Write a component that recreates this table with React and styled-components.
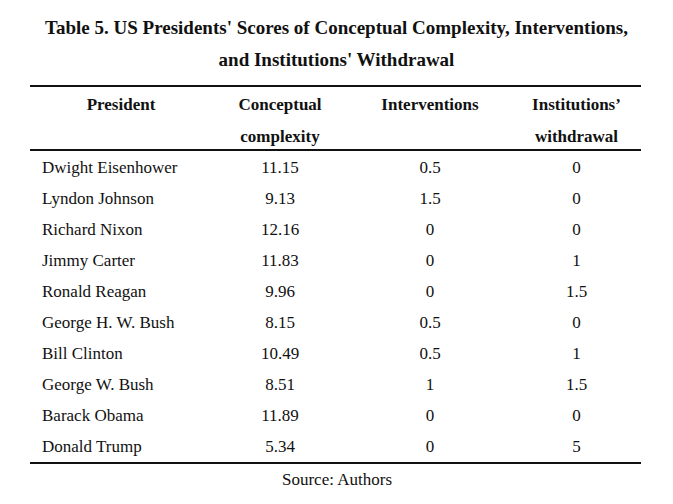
import React from 'react';
import styled, { createGlobalStyle } from 'styled-components';

const GlobalStyle = createGlobalStyle`
  html, body {
    margin: 0;
    padding: 0;
    background: #fff;
  }
  body {
    font-family: "Liberation Serif", "Times New Roman", serif;
    color: #111;
  }
`;

const Page = styled.div`
  width: 673px;
  height: 504px;
  padding-top: 12px;
  box-sizing: border-box;
`;

const Title = styled.h2`
  margin: 0 0 9px;
  text-align: center;
  font-size: 19px;
  font-weight: bold;
  line-height: 32px;
`;

const Table = styled.div`
  margin-left: 30px;
  width: 611px;
  border-top: 2px solid #111;
  border-bottom: 2px solid #111;
`;

const HeadRow = styled.div`
  display: grid;
  grid-template-columns: 182px 136px 164px 129px;
  align-items: start;
  height: 60px;
  padding-top: 2px;
  border-bottom: 2px solid #111;
  margin-bottom: 1px;
`;

const Row = styled.div`
  display: grid;
  grid-template-columns: 182px 136px 164px 129px;
  align-items: center;
  height: 31px;
`;

const HeadCell = styled.div`
  text-align: center;
  font-size: 17px;
  font-weight: bold;
  line-height: 32px;
`;

const Cell = styled.div`
  font-size: 17px;
  line-height: 31px;
  text-align: ${(p) => (p.$name ? 'left' : 'center')};
  padding-left: ${(p) => (p.$name ? '12px' : '0')};
`;

const Source = styled.p`
  margin: 0;
  text-align: center;
  font-size: 17px;
  line-height: 31px;
  padding-left: 1px;
`;

const rows = [
  ['Dwight Eisenhower', '11.15', '0.5', '0'],
  ['Lyndon Johnson', '9.13', '1.5', '0'],
  ['Richard Nixon', '12.16', '0', '0'],
  ['Jimmy Carter', '11.83', '0', '1'],
  ['Ronald Reagan', '9.96', '0', '1.5'],
  ['George H. W. Bush', '8.15', '0.5', '0'],
  ['Bill Clinton', '10.49', '0.5', '1'],
  ['George W. Bush', '8.51', '1', '1.5'],
  ['Barack Obama', '11.89', '0', '0'],
  ['Donald Trump', '5.34', '0', '5'],
];

const App = () => {
  return (
    <>
      <GlobalStyle />
      <Page>
        <Title>
          Table 5. US Presidents' Scores of Conceptual Complexity, Interventions,
          <br />
          and Institutions' Withdrawal
        </Title>
        <Table>
          <HeadRow>
            <HeadCell>President</HeadCell>
            <HeadCell>
              Conceptual
              <br />
              complexity
            </HeadCell>
            <HeadCell>Interventions</HeadCell>
            <HeadCell>
              Institutions’
              <br />
              withdrawal
            </HeadCell>
          </HeadRow>
          {rows.map((r) => (
            <Row key={r[0]}>
              <Cell $name>{r[0]}</Cell>
              <Cell>{r[1]}</Cell>
              <Cell>{r[2]}</Cell>
              <Cell>{r[3]}</Cell>
            </Row>
          ))}
        </Table>
        <Source>Source: Authors</Source>
      </Page>
    </>
  );
};

export default App;
